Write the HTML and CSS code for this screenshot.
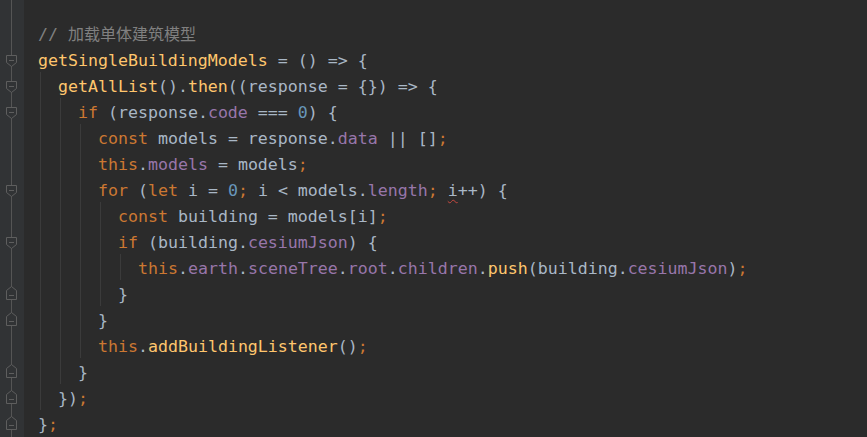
FILE: index.html
```html
<!DOCTYPE html>
<html lang="zh">
<head>
<meta charset="utf-8">
<title>editor</title>
<link rel="stylesheet" href="styles.css">
</head>
<body>
<div class="editor">
  <div class="gutter">
    <div class="g-row"></div>
    <div class="g-row"><svg class="fold" viewBox="0 0 24 26" width="24" height="26"><path class="mk" d="M6.5 9.5H16.5V16.5L11.5 20.5L6.5 16.5Z"/><path class="mn" d="M9 14.5H14"/></svg></div>
    <div class="g-row"><svg class="fold" viewBox="0 0 24 26" width="24" height="26"><path class="mk" d="M6.5 9.5H16.5V16.5L11.5 20.5L6.5 16.5Z"/><path class="mn" d="M9 14.5H14"/></svg></div>
    <div class="g-row"><svg class="fold" viewBox="0 0 24 26" width="24" height="26"><path class="mk" d="M6.5 9.5H16.5V16.5L11.5 20.5L6.5 16.5Z"/><path class="mn" d="M9 14.5H14"/></svg></div>
    <div class="g-row"></div>
    <div class="g-row"></div>
    <div class="g-row"><svg class="fold" viewBox="0 0 24 26" width="24" height="26"><path class="mk" d="M6.5 9.5H16.5V16.5L11.5 20.5L6.5 16.5Z"/><path class="mn" d="M9 14.5H14"/></svg></div>
    <div class="g-row"></div>
    <div class="g-row"><svg class="fold" viewBox="0 0 24 26" width="24" height="26"><path class="mk" d="M6.5 9.5H16.5V16.5L11.5 20.5L6.5 16.5Z"/><path class="mn" d="M9 14.5H14"/></svg></div>
    <div class="g-row"></div>
    <div class="g-row"><svg class="fold" viewBox="0 0 24 26" width="24" height="26"><path class="mk" d="M6.5 19.5V10.5L11.5 6.5L16.5 10.5V19.5Z"/><path class="mn" d="M9 15.5H14"/></svg></div>
    <div class="g-row"><svg class="fold" viewBox="0 0 24 26" width="24" height="26"><path class="mk" d="M6.5 19.5V10.5L11.5 6.5L16.5 10.5V19.5Z"/><path class="mn" d="M9 15.5H14"/></svg></div>
    <div class="g-row"></div>
    <div class="g-row"><svg class="fold" viewBox="0 0 24 26" width="24" height="26"><path class="mk" d="M6.5 19.5V10.5L11.5 6.5L16.5 10.5V19.5Z"/><path class="mn" d="M9 15.5H14"/></svg></div>
    <div class="g-row"><svg class="fold" viewBox="0 0 24 26" width="24" height="26"><path class="mk" d="M6.5 19.5V10.5L11.5 6.5L16.5 10.5V19.5Z"/><path class="mn" d="M9 15.5H14"/></svg></div>
    <div class="g-row"><svg class="fold" viewBox="0 0 24 26" width="24" height="26"><path class="mk" d="M6.5 19.5V10.5L11.5 6.5L16.5 10.5V19.5Z"/><path class="mn" d="M9 15.5H14"/></svg></div>
  </div>
  <div class="code">
    <div class="line"><span class="t c">// <span class="cjk">加载单体建筑模型</span></span></div>
    <div class="line"><span class="t"><span class="f">getSingleBuildingModels</span> = () =&gt; {</span></div>
    <div class="line"><span class="ind"></span><span class="t"><span class="f">getAllList</span>().<span class="f">then</span>((response = {}) =&gt; {</span></div>
    <div class="line"><span class="ind"></span><span class="ind"></span><span class="t"><span class="k">if</span> (response.<span class="p">code</span> === <span class="n">0</span>) {</span></div>
    <div class="line"><span class="ind"></span><span class="ind"></span><span class="ind"></span><span class="t"><span class="k">const</span> models = response.<span class="p">data</span> || []<span class="k">;</span></span></div>
    <div class="line"><span class="ind"></span><span class="ind"></span><span class="ind"></span><span class="t"><span class="k">this</span>.<span class="p">models</span> = models<span class="k">;</span></span></div>
    <div class="line"><span class="ind"></span><span class="ind"></span><span class="ind"></span><span class="t"><span class="k">for</span> (<span class="k">let</span> i = <span class="n">0</span><span class="k">;</span> i &lt; models.<span class="p">length</span><span class="k">;</span> <span class="typo">i</span>++) {</span></div>
    <div class="line"><span class="ind"></span><span class="ind"></span><span class="ind"></span><span class="ind"></span><span class="t"><span class="k">const</span> building = models[i]<span class="k">;</span></span></div>
    <div class="line"><span class="ind"></span><span class="ind"></span><span class="ind"></span><span class="ind"></span><span class="t"><span class="k">if</span> (building.<span class="p">cesiumJson</span>) {</span></div>
    <div class="line"><span class="ind"></span><span class="ind"></span><span class="ind"></span><span class="ind"></span><span class="ind"></span><span class="t"><span class="k">this</span>.<span class="p">earth</span>.<span class="p">sceneTree</span>.<span class="p">root</span>.<span class="p">children</span>.<span class="f">push</span>(building.<span class="p">cesiumJson</span>)<span class="k">;</span></span></div>
    <div class="line"><span class="ind"></span><span class="ind"></span><span class="ind"></span><span class="ind"></span><span class="t">}</span></div>
    <div class="line"><span class="ind"></span><span class="ind"></span><span class="ind"></span><span class="t">}</span></div>
    <div class="line"><span class="ind"></span><span class="ind"></span><span class="ind"></span><span class="t"><span class="k">this</span>.<span class="f">addBuildingListener</span>()<span class="k">;</span></span></div>
    <div class="line"><span class="ind"></span><span class="ind"></span><span class="t">}</span></div>
    <div class="line"><span class="ind"></span><span class="t">})<span class="k">;</span></span></div>
    <div class="line"><span class="t">}<span class="k">;</span></span></div>
  </div>
</div>
</body>
</html>
```
FILE: styles.css
```css
html, body {
  margin: 0;
  padding: 0;
  background: #2b2b2b;
  overflow: hidden;
}

.editor {
  display: flex;
  height: 437px;
}

.gutter {
  flex: none;
  width: 24px;
  box-sizing: border-box;
  padding-top: 20px;
  background: linear-gradient(#555555, #555555) no-repeat 11px 0 / 1px 100%, #313335;
}

.g-row {
  height: 26px;
}

.fold {
  display: block;
}

.mk {
  fill: #313335;
  stroke: #5e5e5e;
  stroke-width: 1;
}

.mn {
  stroke: #5e5e5e;
  stroke-width: 1;
  fill: none;
}

.code {
  flex: 1;
  box-sizing: border-box;
  padding: 20px 0 0 14px;
  font-family: "DejaVu Sans Mono", "Liberation Mono", monospace;
  font-size: 16.6px;
  line-height: 26px;
  color: #a9b7c6;
}

.line {
  display: flex;
  height: 26px;
}

.ind {
  flex: none;
  width: 20px;
  height: 26px;
  background: linear-gradient(#3b3b3b, #3b3b3b) no-repeat 2px 0 / 1px 100%;
}

.t {
  white-space: pre;
  padding-top: 2px;
}

.c { color: #808080; }
.cjk {
  font-family: "Noto Sans CJK SC", sans-serif;
  font-size: 16px;
  line-height: 1;
}
.k { color: #cc7832; }
.f { color: #ffc66d; }
.p { color: #9876aa; }
.n { color: #6897bb; }

.typo {
  text-decoration: underline wavy #c5483f;
  text-decoration-thickness: 1px;
  text-underline-offset: 3px;
}
```
